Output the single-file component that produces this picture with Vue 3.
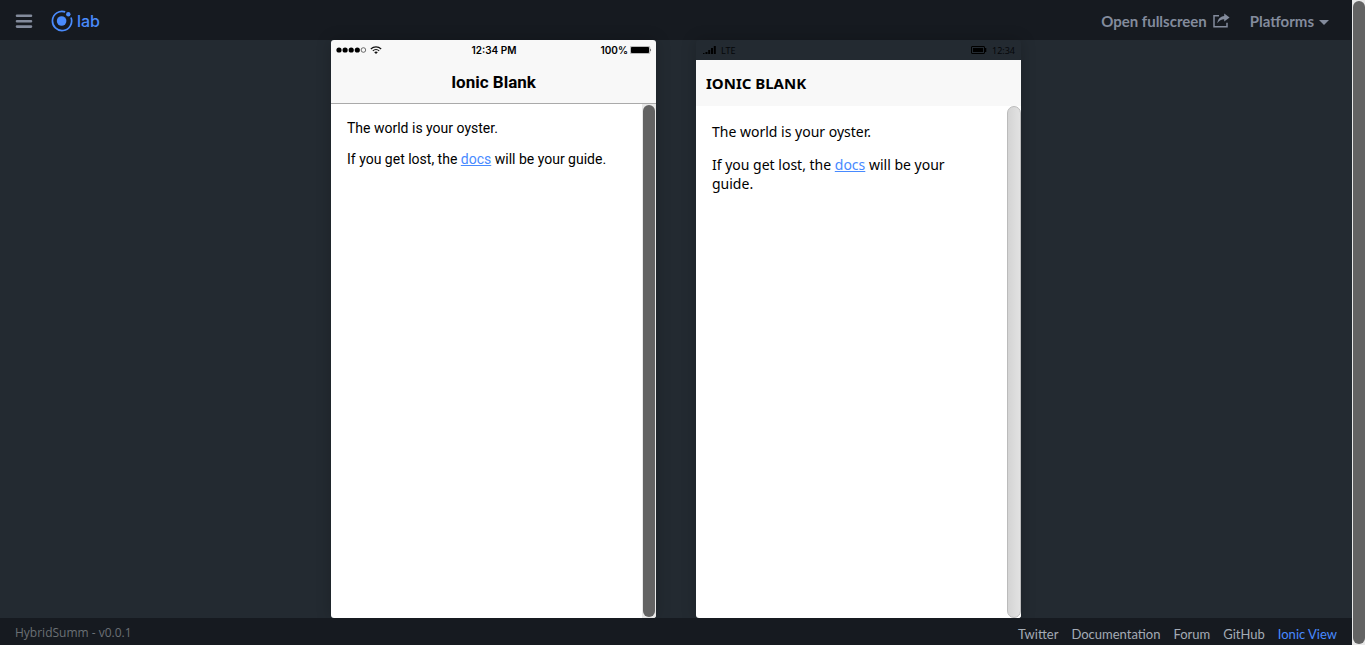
<script setup>
const links = [
  { label: 'Twitter' },
  { label: 'Documentation' },
  { label: 'Forum' },
  { label: 'GitHub' },
  { label: 'Ionic View', active: true },
]
</script>

<template>
  <div class="lab">
    <div class="window">
      <header class="topbar">
        <button class="menu" aria-label="Menu">
          <svg width="18" height="14" viewBox="0 0 18 14" stroke="currentColor" stroke-width="2.6" stroke-linecap="round">
            <path d="M2 1.8h14M2 7.2h14M2 12.6h14" />
          </svg>
        </button>
        <a class="brand" href="#">
          <svg width="22" height="22" viewBox="0 0 22 22" fill="currentColor">
            <path d="M14.2 1.9A9.6 9.6 0 1 0 20 7.5" fill="none" stroke="currentColor" stroke-width="1.7" />
            <circle cx="10.6" cy="11" r="4.8" />
            <circle cx="17.3" cy="4.2" r="2.2" />
          </svg>
          <span>lab</span>
        </a>
        <nav class="actions">
          <a class="action" href="#">
            <span>Open fullscreen</span>
            <svg width="17" height="15" viewBox="0 0 17 15">
              <path d="M6 2.7H1V13.7H14V9.8" fill="none" stroke="currentColor" stroke-width="1.5" />
              <path d="M11.2 0.4L16.6 4.5L11.2 8.6V6.2C8.3 6.2 6.3 7.5 4.3 10.2C4.8 6.3 7.2 3.2 11.2 2.9Z" fill="currentColor" />
            </svg>
          </a>
          <button class="action platforms">
            <span>Platforms</span>
            <svg width="10" height="5" viewBox="0 0 10 5"><path d="M0 0h10L5 5z" fill="currentColor" /></svg>
          </button>
        </nav>
      </header>

      <main class="stage">
        <section class="phone ios">
          <div class="status">
            <div class="signal">
              <svg width="31" height="6" viewBox="0 0 31 6">
                <circle cx="3" cy="3" r="2.6" /><circle cx="9.1" cy="3" r="2.6" />
                <circle cx="15.2" cy="3" r="2.6" /><circle cx="21.3" cy="3" r="2.6" />
                <circle cx="27.4" cy="3" r="2.3" fill="none" stroke="#333" stroke-width=".7" />
              </svg>
              <svg width="12" height="8" viewBox="0 0 12 8" fill="none" stroke="#111" stroke-width="1.1">
                <path d="M.8 3C3.8.1 8.2.1 11.2 3M2.8 4.9C4.6 3.1 7.4 3.1 9.2 4.9" />
                <path d="M4.2 6.2Q6 4.9 7.8 6.2L6 8Z" fill="#111" stroke="none" />
              </svg>
            </div>
            <span>12:34 PM</span>
            <div class="battery">
              <span>100%</span>
              <svg width="22" height="8" viewBox="0 0 22 8">
                <rect x=".3" y=".3" width="19.4" height="7.4" rx="1.3" fill="none" stroke="#777" stroke-width=".6" />
                <rect x="1" y="1" width="18" height="6" rx=".7" /><path d="M20.4 2.5q1.4 1.5 0 3z" />
              </svg>
            </div>
          </div>
          <h1 class="title">Ionic Blank</h1>
          <div class="body">
            <div class="content">
              <p>The world is your oyster.</p>
              <p>If you get lost, the <a href="#">docs</a> will be your guide.</p>
            </div>
            <div class="track"><div class="thumb"></div></div>
          </div>
        </section>

        <section class="phone windows">
          <div class="status">
            <div class="signal">
              <svg width="13" height="8" viewBox="0 0 13 8">
                <path d="M0 7h1.5v1H0zM2.5 6h2v2h-2zM5.2 4h2v4h-2zM8 2h2v6H8zM10.8 0h2v8h-2z" />
              </svg>
              <span>LTE</span>
            </div>
            <div class="battery">
              <svg width="16" height="8" viewBox="0 0 16 8">
                <rect x=".5" y=".5" width="13" height="7" rx=".5" fill="none" stroke="#000" />
                <path d="M2 2h10v4H2zM14 2h1.3v4H14z" />
              </svg>
              <span>12:34</span>
            </div>
          </div>
          <h1 class="title">IONIC BLANK</h1>
          <div class="body">
            <div class="content">
              <p>The world is your oyster.</p>
              <p>If you get lost, the <a href="#">docs</a> will be your guide.</p>
            </div>
            <div class="track"><div class="thumb"></div></div>
          </div>
        </section>
      </main>

      <footer class="footer">
        <span class="version">HybridSumm - v0.0.1</span>
        <nav class="links">
          <a v-for="link in links" :key="link.label" href="#" :class="{ active: link.active }">{{ link.label }}</a>
        </nav>
      </footer>
    </div>
    <div class="track page-track"><div class="thumb"></div></div>
  </div>
</template>

<style>
body {
  margin: 0;
}
</style>

<style scoped>
* {
  box-sizing: border-box;
}
.lab {
  display: flex;
  height: 100vh;
  background: #232a31;
  font-family: Lato, "Open Sans", sans-serif;
}
.window {
  flex: 1;
  min-width: 0;
  display: flex;
  flex-direction: column;
}
button {
  padding: 0;
  border: 0;
  background: none;
  font: inherit;
  color: inherit;
}
a {
  color: inherit;
  text-decoration: none;
}
svg {
  display: block;
  flex: none;
}
.topbar {
  height: 40px;
  flex: none;
  display: flex;
  align-items: center;
  padding: 1px 23px 0 15px;
  background: #161a20;
  color: #838b9c;
}
.brand {
  display: flex;
  align-items: center;
  gap: 4px;
  margin-left: 18px;
  color: #4a8bfc;
  font: 500 16px/22px Inter, sans-serif;
}
.actions {
  display: flex;
  margin-left: auto;
  gap: 20px;
}
.action {
  display: flex;
  align-items: center;
  gap: 6px;
  font-size: 15px;
  line-height: 18px;
  font-weight: 700;
}
.platforms {
  gap: 5px;
}
.platforms svg {
  margin-top: 3px;
}
.stage {
  flex: 1;
  min-height: 0;
  display: flex;
  justify-content: center;
  gap: 40px;
}
.phone {
  width: 325px;
  display: flex;
  flex-direction: column;
  border-radius: 3px;
  overflow: hidden;
  box-shadow: 0 0 16px rgba(0, 0, 0, 0.2);
  color: #000;
}
.status {
  height: 20px;
  flex: none;
  display: flex;
  align-items: center;
  justify-content: space-between;
}
.signal,
.battery {
  display: flex;
  align-items: center;
}
.title {
  margin: 0;
  flex: none;
  background: #f8f8f8;
}
.body {
  flex: 1;
  min-height: 0;
  display: flex;
  background: #fff;
}
.content {
  flex: 1;
  padding: 16px;
  font-size: 14px;
}
.content p {
  margin: 0;
}
.content a {
  color: #488aff;
  text-decoration: underline;
}
.ios {
  font-family: Roboto, sans-serif;
}
.ios .status {
  padding: 0 4px 0 5px;
  background: #f8f8f8;
  font: 600 10px/20px Inter, sans-serif;
}
.ios .signal,
.ios .battery {
  flex: 1;
}
.ios .signal {
  gap: 3px;
}
.ios .battery {
  justify-content: flex-end;
  gap: 2px;
}
.ios .title {
  height: 44px;
  border-bottom: 1px solid #aaa;
  font-size: 17px;
  line-height: 44px;
  font-weight: 700;
  text-align: center;
}
.ios .content p {
  line-height: 17px;
  margin-bottom: 14px;
}
.windows {
  font-family: "Noto Sans", sans-serif;
}
.windows .status {
  padding: 0 6px 0 7px;
  font-size: 9px;
  color: #05070a;
}
.windows .signal,
.windows .battery {
  gap: 5px;
}
.windows .title {
  height: 46px;
  padding-left: 10px;
  font-size: 15px;
  line-height: 46px;
  font-weight: 700;
}
.windows .content {
  padding-right: 32px;
}
.windows .content p {
  line-height: 19px;
  margin-bottom: 14px;
}
.track {
  width: 14px;
  flex: none;
  display: flex;
  padding: 1px;
  background: #e8e8e8;
}
.thumb {
  flex: 1;
  border-radius: 7px;
  background: #636363;
}
.windows .track {
  padding: 0;
  background: #fff;
}
.windows .thumb {
  border: 1px solid #bbb;
  background: linear-gradient(90deg, #d4d4d4, #e2e2e2);
}
.page-track {
  width: 13px;
  padding: 1px 0 1px 1px;
}
.footer {
  height: 27px;
  flex: none;
  display: flex;
  align-items: center;
  justify-content: space-between;
  padding: 0 15px;
  background: #161a20;
  font-size: 13px;
}
.version {
  padding-top: 2px;
  color: #6b7075;
  font-family: "Open Sans", sans-serif;
  font-size: 12px;
}
.links {
  display: flex;
  gap: 13px;
  padding-top: 5px;
  color: #a4abb5;
}
.links .active {
  color: #488aff;
}
</style>
